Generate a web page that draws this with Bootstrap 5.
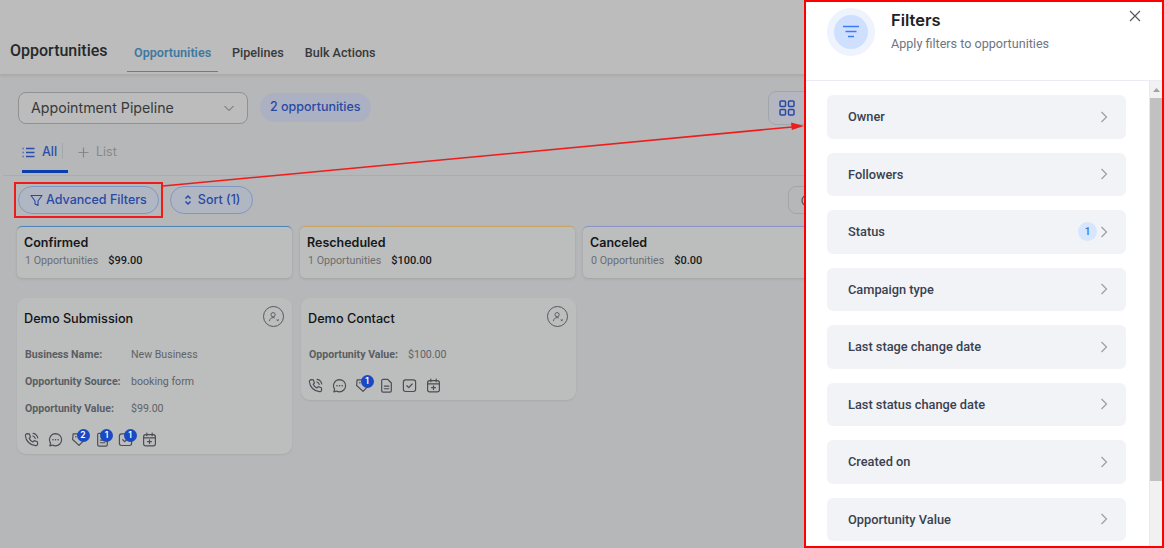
<!DOCTYPE html>
<html lang="en">
<head>
<meta charset="utf-8">
<title>Opportunities</title>
<link href="https://cdn.jsdelivr.net/npm/bootstrap@5.3.0/dist/css/bootstrap.min.css" rel="stylesheet">
<style>
html,body{height:548px;overflow:hidden}
body{background:#b6b7b8;font-family:Inter,"Liberation Sans",sans-serif;color:#1a1c1e;position:relative}
svg{display:block;flex:none}
.topbar{height:75px;background:#bcbcbc;border-bottom:1px solid #a9aaab;box-shadow:0 1px 3px rgba(0,0,0,.08);padding-left:10px;align-items:flex-end}
.page-title{font-family:Roboto,sans-serif;font-size:16px;font-weight:500;color:#26282a;line-height:20px;margin:0 18px 13px 0;width:99px;white-space:nowrap}
.top-tab{font-family:Roboto,sans-serif;font-size:12.6px;font-weight:500;color:#37393b;line-height:16px;padding:3px 7px 11px;margin-right:7px;height:32px}
.top-tab.on{color:#40799f;font-weight:600;border-bottom:1px solid #4d85ab;margin-bottom:2px;height:30px;width:91px;white-space:nowrap}
.tool-row{height:66px;padding:17px 0 0 18px}
.pipe-select{width:230px;height:32px;border:1px solid #8f9193;border-radius:8px;padding:0 12px 0 12px;font-size:14.2px;color:#37393b;background:#bcbcbc}
.pipe-count{margin-left:12px;height:29px;margin-top:1px;padding:0 10px;border-radius:15px;background:#abb1c2;color:#2a49a3;font-size:12.5px;font-weight:500}
.view-btn{position:absolute;left:768px;top:91px;width:60px;height:34px;border:1px solid #a2a5ab;border-radius:8px;background:#b4b7c0;padding-left:10px}
.view-tabs{height:35px;margin-left:3px;border-bottom:1px solid #abacad;padding-left:19px}
.vt-all{width:46px;height:32px;border-bottom:3px solid #0b3ead;color:#2c4cab;font-size:12.5px;font-weight:500;gap:7px;padding-bottom:7px}
.vt-sep{width:1px;height:16px;background:#a6a7a8;margin:2px 15px 0 -6px}
.vt-list{color:#87898b;font-size:12.5px;gap:7px;padding-bottom:10px;height:32px}
.pill-row{height:50px;padding:10px 0 0 18px;gap:11px}
.pill-btn{height:28px;border:1px solid #7f97c4;border-radius:14px;background:#b1b6c3;color:#2a49a3;font-size:12.5px;font-weight:500;padding:0 11px;gap:3px}
.pill-btn.pill-sort{gap:4px;padding-right:12px}
.round-side{position:absolute;left:788px;top:186px;width:40px;height:28px;border:1px solid #a2a4a6;border-radius:8px;padding-left:12px}
.stat-row{padding-left:17px;gap:8px;width:1200px}
.stat-box{width:275px;height:52px;background:#bcbdbd;border-radius:5px;border-top:1px solid #4e84b5;box-shadow:0 1px 3px rgba(0,0,0,.12);padding:8px 7px}
.stat-box.amber{border-top-color:#c9a668}
.stat-box.violet{border-top-color:#8b93c9}
.stat-name{font-size:12.5px;font-weight:600;line-height:16px;color:#15171a}
.stat-meta{font-size:10.7px;line-height:14px;margin-top:3px;padding-left:1px;color:#6b6e73;font-family:Roboto,Inter,sans-serif;gap:10px}
.stat-meta b{color:#17191c;font-weight:500;font-size:11px}
.board{padding:20px 0 0 17px;gap:9px;align-items:flex-start}
.deal{width:275px;background:#bcbdbd;border-radius:9px;box-shadow:0 1px 2px rgba(0,0,0,.08);padding:10px 7px 0 7px}
.deal-head{height:33px}
.deal-name{font-size:12.7px;font-weight:500;line-height:20px;color:#111316;margin-top:1px}
.avatar{width:21px;height:21px;border:1px solid #55585c;border-radius:50%;margin:-2px 1px 0 0;justify-content:center;align-items:center}
.field{font-family:Roboto,"Liberation Sans",sans-serif;font-size:10.6px;line-height:14px;height:27px;padding:7px 0 0 1px;color:#5f6368;margin:0}
.field b{font-weight:700;color:#595e64;width:106px;flex:none}
.field.short b{width:99px}
.deal-icons{height:33px;gap:8.5px;padding:11px 0 0 0;margin-top:-1px;align-items:flex-start}
.ic-wrap{position:relative;width:15px;height:15px}
.cnt{position:absolute;left:5.5px;top:-3px;width:13px;height:13px;border-radius:50%;background:#1a49c4;color:#fff;font-size:8.5px;font-weight:600;line-height:13px;text-align:center}
.drawer{position:absolute;left:804px;top:0;width:360px;height:548px;background:#fff;border:2px solid #f00;z-index:5}
.drawer-head{height:79px;border-bottom:1px solid #e9ecf2;padding:6px 0 0 21px}
.halo{width:48px;height:48px;border-radius:50%;background:#eef3fe;margin-right:16px;flex:none}
.core{width:34px;height:34px;border-radius:50%;background:#cfe0fe}
.d-title{font-size:16.500px;font-weight:600;line-height:20px;color:#1d2129;margin-top:2px}
.d-sub{font-family:Roboto,sans-serif;font-size:12.6px;line-height:16px;color:#6f7582;margin-top:6px}
.d-close{position:absolute;right:21px;top:8px}
.drawer-main{height:465px}
.drawer-list{width:323px;padding:14px 0 0 21px;gap:14px}
.f-item{width:299px;height:43.5px;background:#f1f3f6;border-radius:6px;padding:0 18px 0 21px;font-family:Roboto,sans-serif;font-size:12.800px;font-weight:500;color:#3a4150;flex:none}
.f-num{width:19px;height:19px;border-radius:50%;background:#d6e6ff;color:#4477c8;font-size:10px;font-weight:600;margin-right:3px}
.sb-track{width:13px;margin-left:auto;background:#f1f1f1;border-left:1px solid #e9e9e9}
.sb-up{height:17px;padding-top:7px}
.sb-thumb{height:383px;background:#c1c1c1}
.note{position:absolute;z-index:4;pointer-events:none}
.note-box{left:14px;top:182px;width:149px;height:36px;border:2px solid #ee1c1c}
.note-line{left:0;top:0}
</style>
</head>
<body>
<header class="topbar d-flex">
  <h1 class="page-title">Opportunities</h1>
  <div class="top-tab on">Opportunities</div>
  <div class="top-tab">Pipelines</div>
  <div class="top-tab">Bulk Actions</div>
</header>

<div class="tool-row d-flex">
  <div class="pipe-select d-flex align-items-center justify-content-between">
    <span>Appointment Pipeline</span>
    <svg width="12" height="12" viewBox="0 0 12 12" fill="none" stroke="#55575a" stroke-width=".9"><path d="M1.500 4l4.500 4.500L10.500 4"/></svg>
  </div>
  <div class="pipe-count d-flex align-items-center">2 opportunities</div>
</div>
<div class="view-btn d-flex align-items-center">
  <svg width="16" height="16" viewBox="0 0 16 16" fill="none" stroke="#2a49a3" stroke-width="1.500"><rect x="1" y="1" width="5.500" height="5.500" rx="1"/><rect x="9.500" y="1" width="5.500" height="5.500" rx="1"/><rect x="1" y="9.500" width="5.500" height="5.500" rx="1"/><rect x="9.500" y="9.500" width="5.500" height="5.500" rx="1"/></svg>
</div>

<div class="view-tabs d-flex">
  <div class="vt-all d-flex align-items-center">
    <svg width="13" height="11" viewBox="0 0 13 11" fill="none" stroke="#2c4cab" stroke-width="1.300"><path d="M4 1.500h8.500M4 5.500h8.500M4 9.500h8.500M.6 1.500h1M.6 5.500h1M.6 9.500h1"/></svg>
    <span>All</span>
  </div>
  <div class="vt-sep"></div>
  <div class="vt-list d-flex align-items-center">
    <svg width="11" height="11" viewBox="0 0 11 11" fill="none" stroke="#85878a" stroke-width="1.200"><path d="M5.500 .5v10M.5 5.500h10"/></svg>
    <span>List</span>
  </div>
</div>

<div class="pill-row d-flex">
  <div class="pill-btn d-flex align-items-center">
    <svg width="13" height="13" viewBox="0 0 13 13" fill="none" stroke="#2a49a3" stroke-width="1.100" stroke-linejoin="round"><path d="M1 1.500h11L8 7v4.500L5 10V7z"/></svg>
    <span>Advanced Filters</span>
  </div>
  <div class="pill-btn pill-sort d-flex align-items-center">
    <svg width="12" height="12" viewBox="0 0 12 12" fill="none" stroke="#2a49a3" stroke-width="1.500"><path d="M3.500 4.500L6 2l2.500 2.500M3.500 7.500L6 10l2.500-2.500"/></svg>
    <span>Sort (1)</span>
  </div>
</div>
<div class="round-side d-flex align-items-center"><svg width="13" height="13" viewBox="0 0 13 13" fill="none" stroke="#4f5256" stroke-width="1.200"><circle cx="6.500" cy="6.500" r="5.500"/></svg></div>

<div class="stat-row d-flex">
  <div class="stat-box">
    <div class="stat-name">Confirmed</div>
    <div class="stat-meta d-flex align-items-center"><span>1 Opportunities</span><b>$99.00</b></div>
  </div>
  <div class="stat-box amber">
    <div class="stat-name">Rescheduled</div>
    <div class="stat-meta d-flex align-items-center"><span>1 Opportunities</span><b>$100.00</b></div>
  </div>
  <div class="stat-box violet">
    <div class="stat-name">Canceled</div>
    <div class="stat-meta d-flex align-items-center"><span>0 Opportunities</span><b>$0.00</b></div>
  </div>
</div>

<svg width="0" height="0" class="position-absolute">
  <defs>
    <g id="i-call" fill="none" stroke="#4a4e55" stroke-width="1.100" stroke-linecap="round" stroke-linejoin="round"><path d="M3 1.500l2 .2 1 3-1.200 1.200c.7 1.600 1.800 2.700 3.400 3.400L9.500 8.100l3 1 .2 2c0 1-1 1.700-2 1.600C5.500 12.200 1.800 8.500 1.300 3.500 1.200 2.500 2 1.500 3 1.500z"/><path d="M8.500 1.300c2.300.4 3.900 2 4.300 4.300M8.300 3.700c1.100.3 1.900 1.100 2.200 2.200"/></g>
    <g id="i-chat" fill="none" stroke="#4a4e55" stroke-width="1.100" stroke-linecap="round" stroke-linejoin="round"><path d="M7 1.500a5.700 5.700 0 0 1 0 11.400c-1 0-1.900-.2-2.700-.7l-2.600.7.700-2.500A5.700 5.700 0 0 1 7 1.500z"/><path d="M4.600 7.200h.1M7 7.200h.1M9.400 7.200h.1" stroke-width="1.400"/></g>
    <g id="i-tag" fill="none" stroke="#4a4e55" stroke-width="1.100" stroke-linecap="round" stroke-linejoin="round"><path d="M2 1.800h5l5.500 5.500-5 5.200L1.500 7z"/><path d="M4.500 4.500h.1" stroke-width="1.400"/></g>
    <g id="i-note" fill="none" stroke="#4a4e55" stroke-width="1.100" stroke-linecap="round" stroke-linejoin="round"><path d="M2.500 2.500a1.300 1.300 0 0 1 1.300-1.300h4.200l3.500 3.500v7.100a1.300 1.300 0 0 1-1.300 1.300H3.800a1.300 1.300 0 0 1-1.300-1.300z"/><path d="M5 7.500h4.200M5 10h4.200"/></g>
    <g id="i-task" fill="none" stroke="#4a4e55" stroke-width="1.100" stroke-linecap="round" stroke-linejoin="round"><rect x="1.300" y="1.800" width="11.400" height="10.800" rx="2"/><path d="M4.500 7.200l1.800 1.800 3.200-3.400"/></g>
    <g id="i-cal" fill="none" stroke="#4a4e55" stroke-width="1.100" stroke-linecap="round" stroke-linejoin="round"><rect x="1.500" y="2.500" width="11" height="10.500" rx="2"/><path d="M1.500 5.500h11M4.500 1v2.500M9.500 1v2.500M7 7.200v3.600M5.200 9h3.600"/></g>
  </defs>
</svg>

<div class="board d-flex">
  <div class="deal">
    <div class="deal-head d-flex justify-content-between">
      <div class="deal-name">Demo Submission</div>
      <div class="avatar d-flex"><svg width="12" height="12" viewBox="0 0 13 13" fill="none" stroke="#55585c" stroke-width="1"><circle cx="5.500" cy="4" r="2.300"/><path d="M1.500 11c.3-2.500 2-3.800 4-3.800 .8 0 1.300.2 1.800.4M9.500 9l2 2M11.500 9l-2 2"/></svg></div>
    </div>
    <p class="field d-flex"><b>Business Name:</b><span>New Business</span></p>
    <p class="field d-flex"><b>Opportunity Source:</b><span>booking form</span></p>
    <p class="field d-flex"><b>Opportunity Value:</b><span>$99.00</span></p>
    <div class="deal-icons d-flex">
      <div class="ic-wrap"><svg width="15" height="15" viewBox="0 0 14 14"><use href="#i-call"/></svg></div>
      <div class="ic-wrap"><svg width="15" height="15" viewBox="0 0 14 14"><use href="#i-chat"/></svg></div>
      <div class="ic-wrap"><svg width="15" height="15" viewBox="0 0 14 14"><use href="#i-tag"/></svg><span class="cnt">2</span></div>
      <div class="ic-wrap"><svg width="15" height="15" viewBox="0 0 14 14"><use href="#i-note"/></svg><span class="cnt">1</span></div>
      <div class="ic-wrap"><svg width="15" height="15" viewBox="0 0 14 14"><use href="#i-task"/></svg><span class="cnt">1</span></div>
      <div class="ic-wrap"><svg width="15" height="15" viewBox="0 0 14 14"><use href="#i-cal"/></svg></div>
    </div>
  </div>
  <div class="deal">
    <div class="deal-head d-flex justify-content-between">
      <div class="deal-name">Demo Contact</div>
      <div class="avatar d-flex"><svg width="12" height="12" viewBox="0 0 13 13" fill="none" stroke="#55585c" stroke-width="1"><circle cx="5.500" cy="4" r="2.300"/><path d="M1.500 11c.3-2.500 2-3.800 4-3.800 .8 0 1.300.2 1.800.4M9.500 9l2 2M11.500 9l-2 2"/></svg></div>
    </div>
    <p class="field short d-flex"><b>Opportunity Value:</b><span>$100.00</span></p>
    <div class="deal-icons d-flex">
      <div class="ic-wrap"><svg width="15" height="15" viewBox="0 0 14 14"><use href="#i-call"/></svg></div>
      <div class="ic-wrap"><svg width="15" height="15" viewBox="0 0 14 14"><use href="#i-chat"/></svg></div>
      <div class="ic-wrap"><svg width="15" height="15" viewBox="0 0 14 14"><use href="#i-tag"/></svg><span class="cnt">1</span></div>
      <div class="ic-wrap"><svg width="15" height="15" viewBox="0 0 14 14"><use href="#i-note"/></svg></div>
      <div class="ic-wrap"><svg width="15" height="15" viewBox="0 0 14 14"><use href="#i-task"/></svg></div>
      <div class="ic-wrap"><svg width="15" height="15" viewBox="0 0 14 14"><use href="#i-cal"/></svg></div>
    </div>
  </div>
</div>

<div class="note note-box"></div>
<svg class="note note-line" width="810" height="200" viewBox="0 0 810 200"><path d="M163 186L792 127" stroke="#ee1c1c" stroke-width="1.500"/><path d="M804 126l-13-3.500 .8 7.500z" fill="#ee1c1c"/></svg>

<aside class="drawer d-flex flex-column">
  <div class="drawer-head d-flex">
    <div class="halo d-flex align-items-center justify-content-center">
      <div class="core d-flex align-items-center justify-content-center">
        <svg width="18" height="14" viewBox="0 0 18 14" fill="none" stroke="#3b7cf5" stroke-width="1.500"><path d="M1 1.500h16M3.500 6.500h11M6 11.500h6"/></svg>
      </div>
    </div>
    <div>
      <div class="d-title">Filters</div>
      <div class="d-sub">Apply filters to opportunities</div>
    </div>
    <div class="d-close"><svg width="12" height="12" viewBox="0 0 12 12" fill="none" stroke="#55585f" stroke-width="1.200"><path d="M1 1l10 10M11 1L1 11"/></svg></div>
  </div>
  <div class="drawer-main d-flex overflow-hidden">
    <div class="drawer-list d-flex flex-column">
      <div class="f-item d-flex align-items-center justify-content-between"><span>Owner</span><svg width="8" height="12" viewBox="0 0 8 12" fill="none" stroke="#9a9ea6" stroke-width="1.200"><path d="M1.500 1l5 5-5 5"/></svg></div>
      <div class="f-item d-flex align-items-center justify-content-between"><span>Followers</span><svg width="8" height="12" viewBox="0 0 8 12" fill="none" stroke="#9a9ea6" stroke-width="1.200"><path d="M1.500 1l5 5-5 5"/></svg></div>
      <div class="f-item d-flex align-items-center"><span class="me-auto">Status</span><span class="f-num d-flex align-items-center justify-content-center">1</span><svg width="8" height="12" viewBox="0 0 8 12" fill="none" stroke="#9a9ea6" stroke-width="1.200"><path d="M1.500 1l5 5-5 5"/></svg></div>
      <div class="f-item d-flex align-items-center justify-content-between"><span>Campaign type</span><svg width="8" height="12" viewBox="0 0 8 12" fill="none" stroke="#9a9ea6" stroke-width="1.200"><path d="M1.500 1l5 5-5 5"/></svg></div>
      <div class="f-item d-flex align-items-center justify-content-between"><span>Last stage change date</span><svg width="8" height="12" viewBox="0 0 8 12" fill="none" stroke="#9a9ea6" stroke-width="1.200"><path d="M1.500 1l5 5-5 5"/></svg></div>
      <div class="f-item d-flex align-items-center justify-content-between"><span>Last status change date</span><svg width="8" height="12" viewBox="0 0 8 12" fill="none" stroke="#9a9ea6" stroke-width="1.200"><path d="M1.500 1l5 5-5 5"/></svg></div>
      <div class="f-item d-flex align-items-center justify-content-between"><span>Created on</span><svg width="8" height="12" viewBox="0 0 8 12" fill="none" stroke="#9a9ea6" stroke-width="1.200"><path d="M1.500 1l5 5-5 5"/></svg></div>
      <div class="f-item d-flex align-items-center justify-content-between"><span>Opportunity Value</span><svg width="8" height="12" viewBox="0 0 8 12" fill="none" stroke="#9a9ea6" stroke-width="1.200"><path d="M1.500 1l5 5-5 5"/></svg></div>
    </div>
    <div class="sb-track">
      <div class="sb-up d-flex justify-content-center"><svg width="7" height="4" viewBox="0 0 7 4"><path d="M3.500 0L7 4H0z" fill="#a3a3a3"/></svg></div>
      <div class="sb-thumb"></div>
    </div>
  </div>
</aside>
<script src="https://cdn.jsdelivr.net/npm/bootstrap@5.3.0/dist/js/bootstrap.bundle.min.js"></script>
</body>
</html>
